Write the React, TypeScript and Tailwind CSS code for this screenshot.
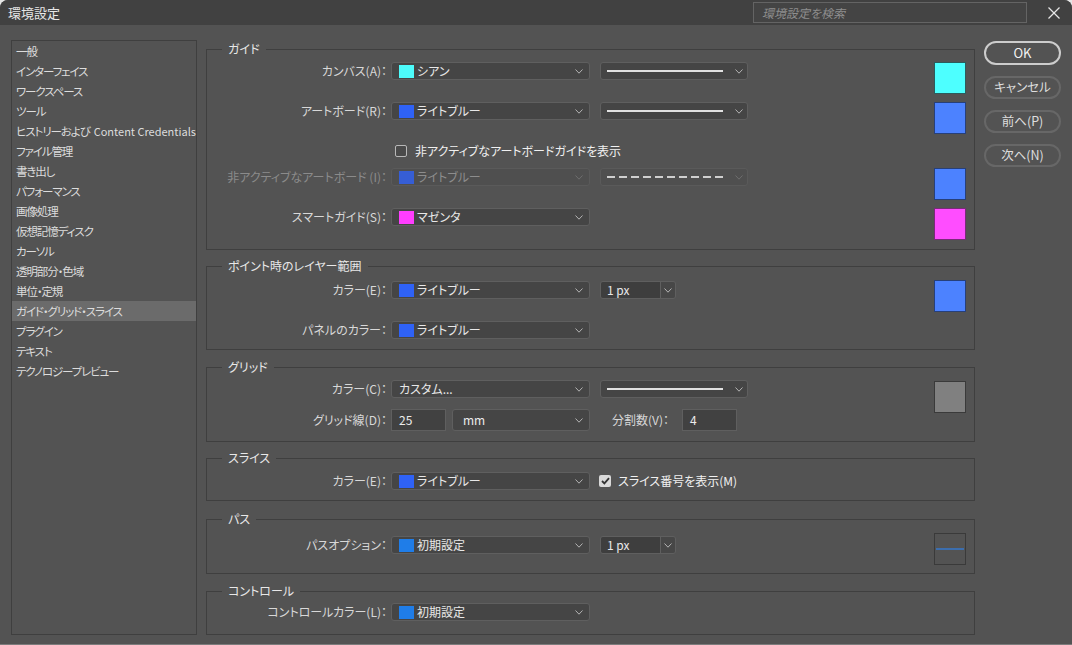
import React from "react";

const Chevron = ({ dim = false }: { dim?: boolean }) => (
  <svg width="8" height="5" viewBox="0 0 8 5" className="shrink-0">
    <polyline points="0.5,0.5 4,4.2 7.5,0.5" fill="none" stroke={dim ? "#6e6e6e" : "#b4b4b4"} strokeWidth="1" />
  </svg>
);

function Label({ children, dim = false, cls = "w-[180px]", lh = "leading-[18px]" }: { children: React.ReactNode; dim?: boolean; cls?: string; lh?: string }) {
  return (
    <div className={`${cls} ${lh} shrink-0 text-right text-[12px] whitespace-nowrap ${dim ? "text-[#8b8b8b]" : "text-[#d8d8d8]"}`}>
      {children}
    </div>
  );
}

function ColorSelect({
  swatch,
  text,
  dim = false,
  cls = "ml-[4px] w-[199px] h-[18px]",
  pl = "pl-[7px]",
}: {
  swatch?: string;
  text: string;
  dim?: boolean;
  cls?: string;
  pl?: string;
}) {
  return (
    <div
      className={`${cls} flex shrink-0 items-center rounded-[3px] border ${pl} pr-[6px] ${
        dim ? "border-[#5a5a5a] bg-[#4f4f4f]" : "border-[#5f5f5f] bg-[#454545]"
      }`}
    >
      {swatch && <span className={`h-[13px] w-[15px] shrink-0 ${swatch} ${dim ? "opacity-80" : ""}`} />}
      <span className={`ml-[3px] text-[12px] leading-[16px] whitespace-nowrap ${dim ? "text-[#8d8d8d]" : "text-[#e8e8e8]"}`}>{text}</span>
      <span className="ml-auto flex items-center">
        <Chevron dim={dim} />
      </span>
    </div>
  );
}

function LineSelect({ dashed = false, dim = false }: { dashed?: boolean; dim?: boolean }) {
  return (
    <div
      className={`ml-[10px] flex h-[18px] w-[148px] shrink-0 items-center rounded-[3px] border pl-[6px] pr-[4px] ${
        dim ? "border-[#5a5a5a] bg-[#4f4f4f]" : "border-[#5f5f5f] bg-[#454545]"
      }`}
    >
      {dashed ? (
        <svg width="116" height="2" viewBox="0 0 116 2" className="shrink-0">
          <line x1="0" y1="1" x2="116" y2="1" stroke="#cfcfcf" strokeWidth="2" strokeDasharray="8 4" />
        </svg>
      ) : (
        <div className="h-[2px] w-[116px] shrink-0 bg-[#e2e2e2]" />
      )}
      <span className="ml-auto flex items-center">
        <Chevron dim={dim} />
      </span>
    </div>
  );
}

function PxSelect() {
  return (
    <div className="ml-[10px] flex h-[18px] w-[76px] shrink-0 overflow-hidden rounded-[3px] border border-[#5f5f5f]">
      <div className="flex-1 bg-[#3e3e3e] pl-[6px] text-[12px] leading-[16px] text-[#e8e8e8]">1 px</div>
      <div className="flex w-[15px] items-center justify-center border-l border-[#5f5f5f] bg-[#474747]">
        <Chevron />
      </div>
    </div>
  );
}

function Swatch({ cls }: { cls: string }) {
  return <div className={`h-[32px] w-[32px] shrink-0 border ${cls}`} />;
}

function Section({ title, children, cls }: { title: string; children: React.ReactNode; cls: string }) {
  return (
    <fieldset className={`${cls} min-w-0 border border-[#3f3f3f]`}>
      <legend className="ml-[15px] px-[6px] text-[12px] leading-[16px] text-[#e8e8e8]">{title}</legend>
      {children}
    </fieldset>
  );
}

const sideItems = [
  "一般",
  "インターフェイス",
  "ワークスペース",
  "ツール",
  "ヒストリーおよび",
  "ファイル管理",
  "書き出し",
  "パフォーマンス",
  "画像処理",
  "仮想記憶ディスク",
  "カーソル",
  "透明部分・色域",
  "単位・定規",
  "ガイド・グリッド・スライス",
  "プラグイン",
  "テキスト",
  "テクノロジープレビュー",
];

export default function App() {
  return (
    <div className="h-[645px] w-[1072px] bg-[#e6e6e6] font-['Noto_Sans_CJK_JP',sans-serif] [font-feature-settings:'palt']">
      <div className="flex h-full w-full flex-col overflow-hidden rounded-t-[8px] border-b border-[#7c7c7c] bg-[#535353]">
        {/* Title bar */}
        <div className="flex h-[25px] shrink-0 items-center bg-[#414141]">
          <div className="pl-[8px] text-[13px] leading-[18px] text-[#e8e8e8]">環境設定</div>
          <div className="ml-auto flex h-[21px] w-[274px] items-center border border-[#646464] bg-[#444444] pl-[8px]">
            <span className="text-[12px] italic leading-[16px] text-[#8e8e8e]">環境設定を検索</span>
          </div>
          <svg width="12" height="12" viewBox="0 0 12 12" className="ml-[21px] mr-[12px] shrink-0">
            <line x1="0.5" y1="0.5" x2="11.5" y2="11.5" stroke="#e6e6e6" strokeWidth="1.3" />
            <line x1="11.5" y1="0.5" x2="0.5" y2="11.5" stroke="#e6e6e6" strokeWidth="1.3" />
          </svg>
        </div>

        {/* Body */}
        <div className="flex items-start">
          {/* Sidebar */}
          <div className="ml-[11px] mt-[15px] h-[595px] w-[186px] shrink-0 border border-[#3f3f3f]">
            {sideItems.map((s, i) => (
              <div
                key={s}
                className={`h-[20px] whitespace-nowrap pl-[4px] text-[11.5px] leading-[20px] tracking-[-1.1px] text-[#dcdcdc] ${
                  i === 13 ? "bg-[#6b6b6b]" : ""
                }`}
              >
                {s}
                {i === 4 && <span className="ml-[4px] text-[11px] tracking-normal">Content Credentials</span>}
              </div>
            ))}
          </div>

          {/* Main */}
          <div className="ml-[9px] flex w-[769px] shrink-0 flex-col">
            <Section title="ガイド" cls="mt-[16px]">
              <div className="pb-[1px] pt-[5px]">
                <div className="flex h-[40px] items-start">
                  <div className="flex h-[18px] items-center">
                    <Label>カンバス(A)：</Label>
                    <ColorSelect swatch="bg-[#4dfcfc]" text="シアン" />
                    <LineSelect />
                  </div>
                  <div className="ml-auto mr-[8px]">
                    <Swatch cls="bg-[#4dffff] border-[#2b5c5c]" />
                  </div>
                </div>
                <div className="flex h-[40px] items-start">
                  <div className="flex h-[18px] items-center">
                    <Label>アートボード(R)：</Label>
                    <ColorSelect swatch="bg-[#2f62f6]" text="ライトブルー" />
                    <LineSelect />
                  </div>
                  <div className="ml-auto mr-[8px]">
                    <Swatch cls="bg-[#4c82ff] border-[#27407a]" />
                  </div>
                </div>
                <div className="flex h-[26px] items-start pl-[188px]">
                  <div className="flex h-[18px] items-center">
                    <div className="h-[12px] w-[12px] rounded-[2px] border border-[#b8b8b8] bg-[#4a4a4a]" />
                    <span className="ml-[8px] text-[12px] leading-[18px] text-[#f0f0f0]">非アクティブなアートボードガイドを表示</span>
                  </div>
                </div>
                <div className="flex h-[40px] items-start">
                  <div className="flex h-[18px] items-center">
                    <Label dim>非アクティブなアートボード (I)：</Label>
                    <ColorSelect swatch="bg-[#2f62f6]" text="ライトブルー" dim />
                    <LineSelect dashed dim />
                  </div>
                  <div className="ml-auto mr-[8px]">
                    <Swatch cls="bg-[#4c82ff] border-[#27407a]" />
                  </div>
                </div>
                <div className="flex h-[40px] items-start">
                  <div className="flex h-[18px] items-center">
                    <Label>スマートガイド(S)：</Label>
                    <ColorSelect swatch="bg-[#ff3dff]" text="マゼンタ" />
                  </div>
                  <div className="ml-auto mr-[8px]">
                    <Swatch cls="bg-[#ff4dff] border-[#7a2a7a]" />
                  </div>
                </div>
              </div>
            </Section>

            <Section title="ポイント時のレイヤー範囲" cls="mt-[8px]">
              <div className="flex items-start">
                <div className="flex flex-col pb-[10px] pt-[7px]">
                  <div className="flex h-[40px] items-start">
                    <div className="flex h-[18px] items-center">
                      <Label>カラー(E)：</Label>
                      <ColorSelect swatch="bg-[#2f62f6]" text="ライトブルー" />
                      <PxSelect />
                    </div>
                  </div>
                  <div className="flex h-[18px] items-center">
                    <Label>パネルのカラー：</Label>
                    <ColorSelect swatch="bg-[#2f62f6]" text="ライトブルー" />
                  </div>
                </div>
                <div className="ml-auto mr-[8px] pt-[6px]">
                  <Swatch cls="bg-[#4c82ff] border-[#27407a]" />
                </div>
              </div>
            </Section>

            <Section title="グリッド" cls="mt-[9px]">
              <div className="flex items-start">
                <div className="flex flex-col pb-[10px] pt-[5px]">
                  <div className="flex h-[29px] items-start">
                    <div className="flex h-[18px] items-center">
                      <Label>カラー(C)：</Label>
                      <ColorSelect text="カスタム..." pl="pl-[4px]" />
                      <LineSelect />
                    </div>
                  </div>
                  <div className="flex h-[22px] items-center">
                    <Label lh="leading-[22px]">グリッド線(D)：</Label>
                    <div className="ml-[4px] h-[22px] w-[55px] shrink-0 border border-[#5f5f5f] bg-[#414141] pl-[7px] text-[12px] leading-[20px] text-[#ececec]">
                      25
                    </div>
                    <div className="ml-[6px] flex h-[22px] w-[138px] shrink-0 items-center rounded-[3px] border border-[#5f5f5f] bg-[#454545] pl-[10px] pr-[6px]">
                      <span className="text-[12px] leading-[16px] text-[#ececec]">mm</span>
                      <span className="ml-auto flex items-center">
                        <Chevron />
                      </span>
                    </div>
                    <div className="ml-[22px] w-[68px] shrink-0 whitespace-nowrap text-[12px] leading-[22px] text-[#d8d8d8]">分割数(V)：</div>
                    <div className="ml-[2px] h-[22px] w-[55px] shrink-0 border border-[#5f5f5f] bg-[#414141] pl-[7px] text-[12px] leading-[20px] text-[#ececec]">
                      4
                    </div>
                  </div>
                </div>
                <div className="ml-auto mr-[8px] pt-[6px]">
                  <Swatch cls="bg-[#808080] border-[#3a3a3a]" />
                </div>
              </div>
            </Section>

            <Section title="スライス" cls="mt-[8px]">
              <div className="flex items-center pb-[10px] pt-[6px]">
                <Label>カラー(E)：</Label>
                <ColorSelect swatch="bg-[#2f62f6]" text="ライトブルー" />
                <div className="ml-[9px] flex h-[12px] w-[12px] shrink-0 items-center justify-center rounded-[2px] bg-[#d9d9d9]">
                  <svg width="9" height="8" viewBox="0 0 9 8">
                    <polyline points="1,4 3.4,6.4 8,1.2" fill="none" stroke="#333333" strokeWidth="1.8" />
                  </svg>
                </div>
                <span className="ml-[7px] text-[12px] leading-[18px] text-[#f0f0f0]">スライス番号を表示(M)</span>
              </div>
            </Section>

            <Section title="パス" cls="mt-[10px]">
              <div className="flex items-start">
                <div className="flex h-[18px] items-center mt-[9px]">
                  <Label>パスオプション：</Label>
                  <ColorSelect swatch="bg-[#1f7de8]" text="初期設定" />
                  <PxSelect />
                </div>
                <div className="ml-auto mr-[8px] pb-[8px] pt-[6px]">
                  <div className="flex h-[32px] w-[32px] items-center border border-[#3a3a3a] px-[1px]">
                    <div className="h-[2px] w-full bg-[#3c6eae]" />
                  </div>
                </div>
              </div>
            </Section>

            <Section title="コントロール" cls="mt-[9px]">
              <div className="flex items-center pb-[13px] pt-[4px]">
                <Label>コントロールカラー(L)：</Label>
                <ColorSelect swatch="bg-[#1f7de8]" text="初期設定" />
              </div>
            </Section>
          </div>

          {/* Buttons */}
          <div className="ml-[9px] mt-[16px] flex w-[77px] shrink-0 flex-col gap-[11px]">
            <div className="flex h-[24px] items-center justify-center rounded-full border-2 border-[#cdcdcd] text-[13px] text-[#f2f2f2]">OK</div>
            <div className="flex h-[23px] items-center justify-center rounded-full border-2 border-[#676767] text-[12.5px] text-[#dedede]">キャンセル</div>
            <div className="flex h-[23px] items-center justify-center rounded-full border-2 border-[#676767] text-[12.5px] text-[#dedede]">前へ(P)</div>
            <div className="flex h-[23px] items-center justify-center rounded-full border-2 border-[#676767] text-[12.5px] text-[#dedede]">次へ(N)</div>
          </div>
        </div>
      </div>
    </div>
  );
}
